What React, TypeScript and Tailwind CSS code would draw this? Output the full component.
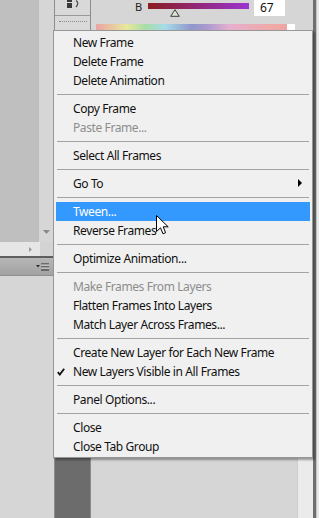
import React from "react";

type Entry = { t: string; dis?: boolean; chk?: boolean; sub?: boolean; hi?: boolean } | null;

const entries: Entry[] = [
  { t: "New Frame" },
  { t: "Delete Frame" },
  { t: "Delete Animation" },
  null,
  { t: "Copy Frame" },
  { t: "Paste Frame...", dis: true },
  null,
  { t: "Select All Frames" },
  null,
  { t: "Go To", sub: true },
  null,
  { t: "Tween...", hi: true },
  { t: "Reverse Frames" },
  null,
  { t: "Optimize Animation..." },
  null,
  { t: "Make Frames From Layers", dis: true },
  { t: "Flatten Frames Into Layers" },
  { t: "Match Layer Across Frames..." },
  null,
  { t: "Create New Layer for Each New Frame" },
  { t: "New Layers Visible in All Frames", chk: true },
  null,
  { t: "Panel Options..." },
  null,
  { t: "Close" },
  { t: "Close Tab Group" },
];

function Menu() {
  return (
    <div className="absolute left-[53px] top-[30px] w-[260px] border border-[#979797] bg-[#f0f0f0] px-[2px] pt-[2px] pb-[1px] shadow-[2px_2px_2px_rgba(0,0,0,0.35)] text-[12px] leading-none tracking-[-0.4px]">
      {entries.map((e, i) =>
        e === null ? (
          <div key={i} className="h-[9px] flex items-center px-[1px]">
            <div className="h-px w-full bg-[#a3a3a3]" />
          </div>
        ) : (
          <div
            key={i}
            className={
              e.hi
                ? "relative h-[19px] flex items-center pl-[17px] bg-[#3399ff] text-white"
                : e.dis
                ? "relative h-[19px] flex items-center pl-[17px] text-[#8d8d8d]"
                : "relative h-[19px] flex items-center pl-[17px] text-[#111]"
            }
          >
            {e.chk && (
              <svg className="absolute left-[1px] top-[6px]" width="8" height="8" viewBox="0 0 8 8">
                <path d="M0.8 4.2 L2.8 6.6 L7.2 0.8" stroke="#111" strokeWidth="1.8" fill="none" />
              </svg>
            )}
            <span>{e.t}</span>
            {e.sub && (
              <svg className="absolute right-[8px] top-[5px]" width="4" height="8" viewBox="0 0 4 8">
                <path d="M0 0 L4 4 L0 8 Z" fill="#000" />
              </svg>
            )}
          </div>
        )
      )}
    </div>
  );
}

function Cursor() {
  return (
    <svg className="absolute left-[156px] top-[215px]" width="13" height="21" viewBox="0 0 13 21">
      <path
        d="M0.5 0.5 L0.5 16.5 L4.5 12.8 L7 18.8 L9.6 17.7 L7.2 11.8 L12.2 11.8 Z"
        fill="#fff"
        stroke="#000"
        strokeWidth="1"
        strokeLinejoin="miter"
      />
    </svg>
  );
}

export default function App() {
  return (
    <div
      className="relative w-[319px] h-[518px] overflow-hidden flex bg-[#d6d6d6]"
      style={{ fontFamily: '"Noto Sans", "Open Sans", sans-serif' }}
    >
      {/* Column A */}
      <div className="w-[54px] flex flex-col">
        <div className="flex-1 flex">
          <div className="w-[39px] bg-[#bfbfbf]" />
          <div className="flex-1 bg-[#d6d6d6] flex flex-col justify-end items-center pb-[8px]">
            <svg width="7" height="4" viewBox="0 0 7 4">
              <path d="M0 0 L7 0 L3.5 4 Z" fill="#8a8a8a" />
            </svg>
          </div>
        </div>
        <div className="h-[14px] flex">
          <div className="w-[40px] bg-[#e6e6e6] flex items-center justify-end pr-[8px]">
            <svg width="3" height="5" viewBox="0 0 3 5">
              <path d="M0 0 L3 2.5 L0 5 Z" fill="#9a9a9a" />
            </svg>
          </div>
          <div className="flex-1 bg-[#d3d3d3]" />
        </div>
        <div className="h-[2px] bg-[#5e5e5e]" />
        <div className="h-[17px] bg-[linear-gradient(#b6b6b6,#a2a2a2)] flex items-center justify-end pr-[4px]">
          <svg width="14" height="8" viewBox="0 0 14 8">
            <path d="M0 2 L4 2 L2 4.5 Z" fill="#2a2a2a" />
            <rect x="5" y="0.5" width="8" height="1" fill="#2a2a2a" />
            <rect x="5" y="3.5" width="8" height="1" fill="#2a2a2a" />
            <rect x="5" y="6.5" width="8" height="1" fill="#2a2a2a" />
            <rect x="5" y="1.5" width="8" height="1" fill="#d0d0d0" />
            <rect x="5" y="4.5" width="8" height="1" fill="#d0d0d0" />
          </svg>
        </div>
        <div className="h-px bg-[#8e8e8e]" />
        <div className="flex-1 bg-[#d6d6d6]" />
      </div>

      {/* Column B */}
      <div className="w-[37px] flex flex-col border-l border-r border-[#8c8c8c]">
        <div className="h-[16px] bg-[#d9d9d9] border-b border-[#9a9a9a] flex justify-center">
          <svg width="16" height="8" viewBox="0 0 16 8" className="ml-[4px]">
            <rect x="0" y="0" width="5" height="2" fill="#3a3a3a" />
            <rect x="0" y="3" width="5" height="5" fill="#3a3a3a" />
            <path d="M9 0.5 Q12.5 3 9 7" stroke="#4a4a4a" strokeWidth="1.2" fill="none" />
          </svg>
        </div>
        <div className="h-[14px] bg-[#d9d9d9] flex items-start justify-center pt-[5px]">
          <div className="w-[28px] h-px border-t border-dotted border-[#8a8a8a]" />
        </div>
        <div className="flex-1 bg-[#6c6c6c]" />
      </div>

      {/* Column C */}
      <div className="flex-1 flex flex-col">
        <div className="h-[31px] bg-[#d6d6d6] flex flex-col">
          <div className="h-[24px] flex items-start pl-[44px]">
            <div className="w-[13px] text-[11px] leading-none pt-[1px] text-[#222]">B</div>
            <div className="w-[101px] pt-[3px] flex flex-col">
              <div className="h-[6px] bg-[linear-gradient(to_right,#8a1d20,#9b34d0)]" />
              <svg className="ml-[22px]" width="10" height="8" viewBox="0 0 10 8">
                <path d="M5 0.7 L9.3 7.3 L0.7 7.3 Z" fill="#d9e6d4" stroke="#3c3c3c" strokeWidth="1" />
              </svg>
            </div>
            <div className="ml-[5px] w-[31px] h-[16px] bg-white text-[12px] leading-none pl-[6px] pt-[2px] text-[#111]">67</div>
          </div>
          <div className="ml-[5px] w-[199px] h-[7px] flex">
            <div className="w-[191px] bg-[linear-gradient(to_right,#eba3a3_0%,#e8e89c_16%,#a8dca8_26%,#a6dce8_36%,#8f97cc_50%,#a99ad0_58%,#e7afcf_70%,#eeaaaa_90%,#f0a4a4_100%)]" />
            <div className="flex-1 bg-white" />
          </div>
        </div>
        <div className="flex-1 flex">
          <div className="flex-1 bg-[#d6d6d6]" />
          <div className="w-[16px] bg-[#ebebeb] border-l border-[#cfcfcf]" />
        </div>
      </div>

      {/* Column D */}
      <div className="w-[6px] flex">
        <div className="w-[3px] bg-[#6f6f6f]" />
        <div className="flex-1 bg-[#e8e8e8] border-l border-[#c4c4c4]" />
      </div>

      <Menu />
      <Cursor />
    </div>
  );
}
